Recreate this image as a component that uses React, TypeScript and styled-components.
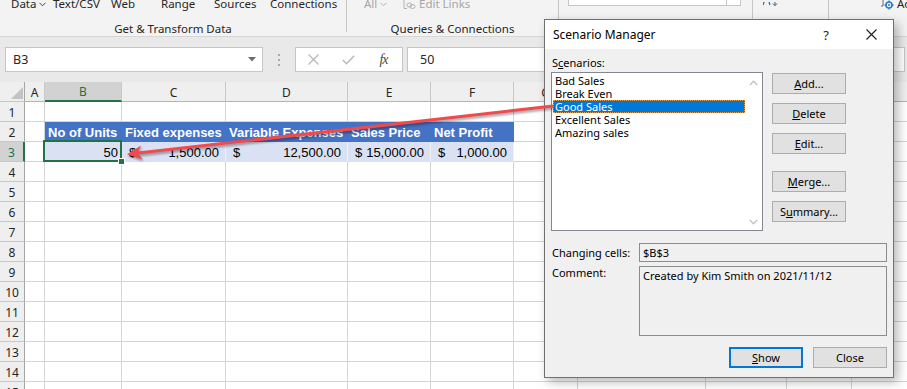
import React from 'react';
import styled, { createGlobalStyle, css } from 'styled-components';

const UI_FONT = `'Noto Sans', 'Open Sans', 'DejaVu Sans', sans-serif`;
const SHEET_FONT = `'Liberation Sans', Arial, sans-serif`;
const GREEN = '#217346';

const GlobalStyle = createGlobalStyle`
  html, body {
    margin: 0;
    padding: 0;
    background: #ffffff;
    overflow: hidden;
  }
  * {
    box-sizing: border-box;
  }
`;

const Screen = styled.div`
  position: relative;
  width: 907px;
  height: 389px;
  overflow: hidden;
  font-family: ${UI_FONT};
  color: #262626;
  background: #ffffff;
`;

/* ---------- ribbon ---------- */

const Ribbon = styled.div`
  display: flex;
  height: 37px;
  background: #f3f3f3;
  border-bottom: 1px solid #d6d6d6;
  font-size: 11.5px;
  overflow: hidden;
`;

const Group = styled.div<{ $w?: number }>`
  width: ${p => (p.$w ? `${p.$w}px` : 'auto')};
  flex: ${p => (p.$w ? '0 0 auto' : '1')};
  display: flex;
  flex-direction: column;
`;

const GroupItems = styled.div<{ $pad: number }>`
  display: flex;
  align-items: center;
  height: 14px;
  margin-top: -3px;
  padding-left: ${p => p.$pad}px;
  line-height: 14px;
  white-space: nowrap;
`;

const RibbonItem = styled.span<{ $w?: number; $muted?: boolean }>`
  display: inline-flex;
  align-items: center;
  gap: 3px;
  flex-shrink: 0;
  width: ${p => (p.$w ? `${p.$w}px` : 'auto')};
  color: ${p => (p.$muted ? '#a6a6a6' : '#262626')};
`;

const GroupLabel = styled.div`
  margin-top: auto;
  margin-bottom: 0;
  line-height: 14px;
  text-align: center;
  white-space: nowrap;
`;

const GroupDivider = styled.div`
  width: 1px;
  height: 32px;
  flex-shrink: 0;
  background: #c6c6c6;
`;

const ComboStub = styled.div`
  display: flex;
  width: 173px;
  height: 15px;
  margin: -9px 0 0 9px;
  background: #ffffff;
  border: 1px solid #c6c6c6;

  span {
    margin-left: auto;
    width: 14px;
    border-left: 1px solid #c6c6c6;
  }
`;

/* ---------- formula bar ---------- */

const FormulaArea = styled.div`
  display: flex;
  align-items: flex-start;
  height: 45px;
  padding-top: 10px;
  background: #e9e9e9;
  font-size: 12.5px;
`;

const NameBox = styled.div`
  display: flex;
  align-items: center;
  justify-content: space-between;
  width: 258px;
  height: 25px;
  margin-left: 5px;
  padding: 0 6px 0 7px;
  background: #ffffff;
  border: 1px solid #c6c6c6;
  color: #262626;
`;

const Grip = styled.div`
  display: flex;
  flex-direction: column;
  align-items: center;
  justify-content: center;
  gap: 3px;
  width: 32px;
  height: 25px;

  i {
    width: 2px;
    height: 2px;
    background: #a9a9a9;
  }
`;

const FnBox = styled.div`
  display: flex;
  width: 108px;
  height: 25px;
  background: #ffffff;
  border: 1px solid #c6c6c6;
`;

const FnSlot = styled.span`
  display: flex;
  align-items: center;
  justify-content: center;
  width: 35px;
`;

const FxMark = styled.span`
  font-family: 'Liberation Serif', 'Times New Roman', serif;
  font-style: italic;
  font-size: 14px;
  color: #4a4a4a;
  letter-spacing: -1px;
`;

const FormulaInput = styled.div`
  flex: 1;
  display: flex;
  align-items: center;
  height: 25px;
  margin: 0 2px 0 4px;
  padding-left: 12px;
  background: #ffffff;
  border: 1px solid #c6c6c6;
  color: #262626;
`;

/* ---------- sheet ---------- */

const COL_WIDTHS = [25, 20, 77, 104, 122, 83, 83, 64, 128, 81, 65, 120];
const COLS = ['A', 'B', 'C', 'D', 'E', 'F', 'G', 'H', 'I', 'J', 'K'];

const Sheet = styled.div`
  display: grid;
  grid-template-columns: ${COL_WIDTHS.map(w => `${w}px`).join(' ')};
  grid-auto-rows: 20px;
`;

const cellBase = css`
  display: flex;
  align-items: center;
  height: 20px;
  white-space: nowrap;
  border-right: 1px solid #d4d4d4;
  border-bottom: 1px solid #d4d4d4;
`;

const Corner = styled.div`
  ${cellBase};
  justify-content: flex-end;
  align-items: flex-end;
  padding: 0 1px 2px 0;
  background: #efefef;
  border-right-color: #a6a6a6;
  border-bottom-color: #c6c6c6;
`;

const ColHead = styled.div<{ $active?: boolean }>`
  ${cellBase};
  justify-content: center;
  padding-top: 1px;
  font-size: 12px;
  background: ${p => (p.$active ? '#d2d2d2' : '#efefef')};
  color: ${p => (p.$active ? GREEN : '#262626')};
  border-right-color: #c8c8c8;
  border-bottom: ${p => (p.$active ? `2px solid ${GREEN}` : '1px solid #b4b4b4')};
`;

const RowHead = styled.div<{ $active?: boolean }>`
  ${cellBase};
  justify-content: center;
  padding-top: 2px;
  font-size: 12px;
  background: ${p => (p.$active ? '#d2d2d2' : '#efefef')};
  color: ${p => (p.$active ? GREEN : '#262626')};
  border-bottom-color: #c8c8c8;
  border-right: ${p => (p.$active ? `2px solid ${GREEN}` : '1px solid #a6a6a6')};
`;

const GridCell = styled.div`
  ${cellBase};
`;

const TableHead = styled.div`
  ${cellBase};
  padding: 2px 0 0 3px;
  background: #4472c4;
  border-color: #4472c4;
  color: #ffffff;
  font-family: ${SHEET_FONT};
  font-weight: bold;
  font-size: 13px;
`;

const BandCell = styled.div<{ $kind: 'num' | 'acct'; $selected?: boolean }>`
  ${cellBase};
  position: relative;
  padding: 2px ${p => (p.$kind === 'num' ? '3px' : '6px')} 0 ${p => (p.$kind === 'num' ? '0' : '7px')};
  justify-content: ${p => (p.$kind === 'num' ? 'flex-end' : 'space-between')};
  background: #d9e1f2;
  border-right-color: #eef2f9;
  border-bottom-color: #d9e1f2;
  color: #000000;
  font-family: ${SHEET_FONT};
  font-size: 13px;

  ${p =>
    p.$selected &&
    css`
      z-index: 1;
      &::after {
        content: '';
        position: absolute;
        left: -2px;
        top: -2px;
        right: -1px;
        bottom: -1px;
        border: 2px solid ${GREEN};
      }
      &::before {
        content: '';
        position: absolute;
        right: -4px;
        bottom: -4px;
        width: 5px;
        height: 5px;
        background: ${GREEN};
        border: 1px solid #ffffff;
        z-index: 2;
      }
    `}
`;

/* ---------- dialog ---------- */

const Dialog = styled.div`
  position: absolute;
  left: 544px;
  top: 19px;
  width: 350px;
  height: 359px;
  display: flex;
  flex-direction: column;
  background: #f0f0f0;
  border: 1px solid #707070;
  box-shadow: 4px 4px 10px rgba(0, 0, 0, 0.28);
  font-family: ${UI_FONT};
  font-size: 11px;
  color: #000000;
  z-index: 5;
`;

const TitleBar = styled.div`
  display: flex;
  align-items: center;
  flex-shrink: 0;
  height: 29px;
  padding-left: 8px;
  background: #ffffff;
  font-size: 12px;
`;

const TitleText = styled.span`
  flex: 1;
`;

const TitleButton = styled.span<{ $w: number; $mr: number }>`
  display: flex;
  align-items: center;
  justify-content: center;
  width: ${p => p.$w}px;
  margin-right: ${p => p.$mr}px;
  font-size: 13px;
  color: #1a1a1a;
`;

const DialogBody = styled.div`
  display: flex;
  flex-direction: column;
  padding: 6px 6px 0 6px;
`;

const FieldLabel = styled.div`
  margin-left: 1px;
  line-height: 16px;
  white-space: nowrap;
`;

const ListRow = styled.div`
  display: flex;
  gap: 9px;
  margin-top: 1px;
`;

const ListBox = styled.div`
  display: flex;
  width: 212px;
  height: 159px;
  background: #ffffff;
  border: 1px solid #828790;
`;

const ListItems = styled.div`
  flex: 1;
  padding-top: 1px;
`;

const ListItem = styled.div<{ $selected?: boolean }>`
  height: 13px;
  margin-left: 1px;
  padding-left: 2px;
  line-height: 13px;
  white-space: nowrap;
  background: ${p => (p.$selected ? '#0078d7' : 'transparent')};
  color: ${p => (p.$selected ? '#ffffff' : '#000000')};
  outline: ${p => (p.$selected ? '1px dotted #e0a050' : 'none')};
  outline-offset: -1px;
`;

const ScrollTrack = styled.div`
  display: flex;
  flex-direction: column;
  justify-content: space-between;
  align-items: center;
  width: 17px;
  padding: 7px 0 5px;
`;

const ButtonColumn = styled.div`
  display: flex;
  flex-direction: column;
`;

const DlgButton = styled.div<{ $gap?: number; $primary?: boolean }>`
  display: flex;
  align-items: center;
  justify-content: center;
  width: 74px;
  height: 21px;
  margin-top: ${p => p.$gap ?? 0}px;
  background: #e1e1e1;
  border: ${p => (p.$primary ? '2px solid #0078d7' : '1px solid #adadad')};
  white-space: nowrap;

  u {
    text-decoration-thickness: 1px;
    text-underline-offset: 1px;
  }
`;

const Fields = styled.div`
  display: grid;
  grid-template-columns: 88px 248px;
  grid-template-rows: 19px 70px;
  row-gap: 4px;
  margin-top: 12px;
`;

const RowLabel = styled.div<{ $top?: boolean }>`
  display: flex;
  align-items: ${p => (p.$top ? 'flex-start' : 'center')};
  margin-left: 1px;
  line-height: 14px;
  white-space: nowrap;
`;

const ReadBox = styled.div<{ $single?: boolean }>`
  display: flex;
  align-items: ${p => (p.$single ? 'center' : 'flex-start')};
  padding: ${p => (p.$single ? '0 3px' : '1px 3px 0')};
  line-height: 15px;
  border: 1px solid #8c8c8c;
  background: #f0f0f0;
  white-space: nowrap;
`;

const Footer = styled.div`
  display: flex;
  justify-content: flex-end;
  gap: 10px;
  margin-top: 11px;
`;

/* ---------- arrow overlay ---------- */

const Overlay = styled.svg`
  position: absolute;
  left: 0;
  top: 0;
  width: 907px;
  height: 389px;
  pointer-events: none;
  z-index: 10;
  filter: drop-shadow(1px 2px 1.2px rgba(0, 0, 0, 0.35));
`;

/* ---------- icons ---------- */

const Chevron = ({ color = '#444' }: { color?: string }) => (
  <svg width="7" height="5" viewBox="0 0 7 5">
    <path d="M0.5 0.8 L3.5 3.8 L6.5 0.8" fill="none" stroke={color} strokeWidth="1" />
  </svg>
);

const LinkIcon = () => (
  <svg width="13" height="12" viewBox="0 0 13 12">
    <path d="M1 0.5 V10.5 H4" fill="none" stroke="#b3b3b3" strokeWidth="1" />
    <ellipse cx="6.5" cy="7" rx="2.6" ry="2" fill="none" stroke="#b3b3b3" strokeWidth="1" />
    <ellipse cx="9.5" cy="8.5" rx="2.6" ry="2" fill="none" stroke="#b3b3b3" strokeWidth="1" />
  </svg>
);

const SortStub = () => (
  <svg width="16" height="5" viewBox="0 0 16 5">
    <path d="M1 0 L0 3 M6 0 L7 3" stroke="#2b6cb8" strokeWidth="1.3" />
    <path d="M12 0 V3 M10 1.5 L12 3.8 L14 1.5" fill="none" stroke="#5a5a5a" strokeWidth="1" />
  </svg>
);

const AdvancedIcon = () => (
  <svg width="14" height="11" viewBox="0 0 14 11">
    <path d="M3 0 V7 H1" fill="none" stroke="#6a6a6a" strokeWidth="1" />
    <circle cx="9" cy="6" r="3" fill="none" stroke="#2b78c8" strokeWidth="1.6" />
    <circle cx="9" cy="6" r="1" fill="#2b78c8" />
    <path d="M9 1.5 V3 M9 9 V10.5 M4.5 6 H6 M12 6 H13.5" stroke="#2b78c8" strokeWidth="1.3" />
  </svg>
);

const CornerTriangle = () => (
  <svg width="12" height="12" viewBox="0 0 12 12">
    <polygon points="12,0 12,12 0,12" fill="#c3c3c3" />
  </svg>
);

const CrossIcon = ({ size, color, w }: { size: number; color: string; w: number }) => (
  <svg width={size} height={size} viewBox={`0 0 ${size} ${size}`}>
    <path d={`M0.5 0.5 L${size - 0.5} ${size - 0.5} M${size - 0.5} 0.5 L0.5 ${size - 0.5}`} stroke={color} strokeWidth={w} />
  </svg>
);

const CheckIcon = () => (
  <svg width="13" height="10" viewBox="0 0 13 10">
    <path d="M0.8 5 L4.5 8.7 L12.2 0.8" fill="none" stroke="#b8b8b8" strokeWidth="1.4" />
  </svg>
);

const ScrollArrow = ({ up }: { up?: boolean }) => (
  <svg width="9" height="6" viewBox="0 0 9 6">
    <path d={up ? 'M0.8 5 L4.5 1.2 L8.2 5' : 'M0.8 1 L4.5 4.8 L8.2 1'} fill="none" stroke="#c2c2c2" strokeWidth="1.3" />
  </svg>
);

/* ---------- data ---------- */

const HEADERS: Record<string, string> = {
  B: 'No of Units',
  C: 'Fixed expenses',
  D: 'Variable Expenses',
  E: 'Sales Price',
  F: 'Net Profit',
};

const VALUES: Record<string, string> = {
  C: '1,500.00',
  D: '12,500.00',
  E: '15,000.00',
  F: '1,000.00',
};

const SCENARIOS = ['Bad Sales', 'Break Even', 'Good Sales', 'Excellent Sales', 'Amazing sales'];

const ROWS = Array.from({ length: 15 }, (_, i) => i + 1);

function renderCell(row: number, col: string) {
  const key = `${col}${row}`;
  if (row === 2 && HEADERS[col]) {
    return <TableHead key={key}>{HEADERS[col]}</TableHead>;
  }
  if (row === 3 && col === 'B') {
    return (
      <BandCell key={key} $kind="num" $selected>
        50
      </BandCell>
    );
  }
  if (row === 3 && VALUES[col]) {
    return (
      <BandCell key={key} $kind="acct">
        <span>$</span>
        <span>{VALUES[col]}</span>
      </BandCell>
    );
  }
  return <GridCell key={key} />;
}

export default function App() {
  return (
    <Screen>
      <GlobalStyle />

      <Ribbon>
        <Group $w={346}>
          <GroupItems $pad={11}>
            <RibbonItem $w={42}>
              Data <Chevron />
            </RibbonItem>
            <RibbonItem $w={58}>Text/CSV</RibbonItem>
            <RibbonItem $w={50}>Web</RibbonItem>
            <RibbonItem $w={53}>Range</RibbonItem>
            <RibbonItem $w={56}>Sources</RibbonItem>
            <RibbonItem>Connections</RibbonItem>
          </GroupItems>
          <GroupLabel>Get &amp; Transform Data</GroupLabel>
        </Group>
        <GroupDivider />
        <Group $w={211}>
          <GroupItems $pad={17}>
            <RibbonItem $w={39} $muted>
              All <Chevron color="#b0b0b0" />
            </RibbonItem>
            <RibbonItem $muted>
              <LinkIcon />
              Edit Links
            </RibbonItem>
          </GroupItems>
          <GroupLabel>Queries &amp; Connections</GroupLabel>
        </Group>
        <GroupDivider />
        <Group $w={193}>
          <ComboStub>
            <span />
          </ComboStub>
        </Group>
        <GroupDivider />
        <Group $w={75}>
          <GroupItems $pad={10}>
            <SortStub />
          </GroupItems>
        </Group>
        <GroupDivider />
        <Group>
          <GroupItems $pad={51}>
            <RibbonItem>
              <AdvancedIcon />
              Advanced
            </RibbonItem>
          </GroupItems>
        </Group>
      </Ribbon>

      <FormulaArea>
        <NameBox>
          B3
          <svg width="8" height="5" viewBox="0 0 8 5">
            <polygon points="0,0 8,0 4,4.5" fill="#6e6e6e" />
          </svg>
        </NameBox>
        <Grip>
          <i />
          <i />
          <i />
        </Grip>
        <FnBox>
          <FnSlot>
            <CrossIcon size={11} color="#b8b8b8" w={1.3} />
          </FnSlot>
          <FnSlot>
            <CheckIcon />
          </FnSlot>
          <FnSlot>
            <FxMark>fx</FxMark>
          </FnSlot>
        </FnBox>
        <FormulaInput>50</FormulaInput>
      </FormulaArea>

      <Sheet>
        <Corner>
          <CornerTriangle />
        </Corner>
        {COLS.map(c => (
          <ColHead key={c} $active={c === 'B'}>
            {c}
          </ColHead>
        ))}
        {ROWS.map(r => (
          <React.Fragment key={r}>
            <RowHead $active={r === 3}>{r}</RowHead>
            {COLS.map(c => renderCell(r, c))}
          </React.Fragment>
        ))}
      </Sheet>

      <Dialog>
        <TitleBar>
          <TitleText>Scenario Manager</TitleText>
          <TitleButton $w={20} $mr={20}>?</TitleButton>
          <TitleButton $w={30} $mr={7}>
            <CrossIcon size={11} color="#1a1a1a" w={1.1} />
          </TitleButton>
        </TitleBar>
        <DialogBody>
          <FieldLabel>
            S<u>c</u>enarios:
          </FieldLabel>
          <ListRow>
            <ListBox>
              <ListItems>
                {SCENARIOS.map(s => (
                  <ListItem key={s} $selected={s === 'Good Sales'}>
                    {s}
                  </ListItem>
                ))}
              </ListItems>
              <ScrollTrack>
                <ScrollArrow up />
                <ScrollArrow />
              </ScrollTrack>
            </ListBox>
            <ButtonColumn>
              <DlgButton $gap={1}>
                <u>A</u>dd...
              </DlgButton>
              <DlgButton $gap={9}>
                <u>D</u>elete
              </DlgButton>
              <DlgButton $gap={9}>
                <u>E</u>dit...
              </DlgButton>
              <DlgButton $gap={17}>
                <u>M</u>erge...
              </DlgButton>
              <DlgButton $gap={9}>
                S<u>u</u>mmary...
              </DlgButton>
            </ButtonColumn>
          </ListRow>
          <Fields>
            <RowLabel>Changing cells:</RowLabel>
            <ReadBox $single>$B$3</ReadBox>
            <RowLabel $top>Comment:</RowLabel>
            <ReadBox>Created by Kim Smith on 2021/11/12</ReadBox>
          </Fields>
          <Footer>
            <DlgButton $primary>
              <u>S</u>how
            </DlgButton>
            <DlgButton>Close</DlgButton>
          </Footer>
        </DialogBody>
      </Dialog>

      <Overlay viewBox="0 0 907 389">
        <line x1="553" y1="106" x2="138" y2="153.1" stroke="#f04a4f" strokeWidth="3" />
        <polygon points="127,154.3 141.1,145.6 137.9,153.1 142.7,159.6" fill="#f04a4f" />
      </Overlay>
    </Screen>
  );
}
